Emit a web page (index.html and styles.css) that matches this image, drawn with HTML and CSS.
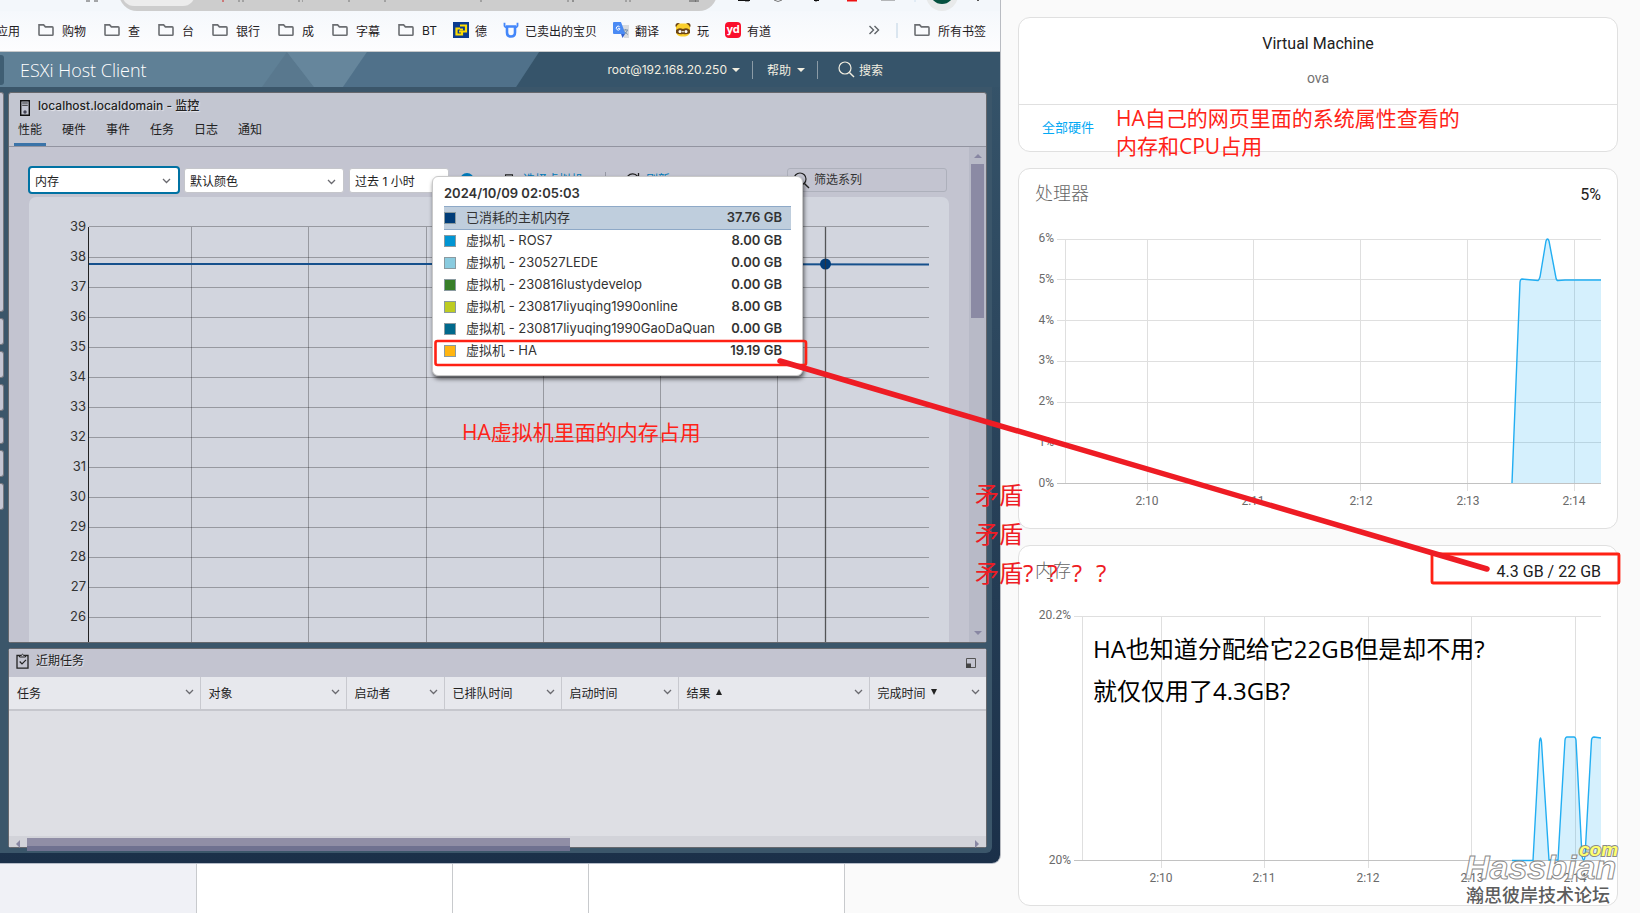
FILE: index.html
```html
<!DOCTYPE html>
<html lang="zh-CN">
<head>
<meta charset="utf-8">
<title>ESXi Host Client</title>
<link rel="stylesheet" href="styles.css">
</head>
<body>
<svg class="defs" aria-hidden="true">
  <symbol id="folder" viewBox="0 0 16 16"><path d="M1 2.9h4.6l1.8 2H14.2q.8 0 .8.8v6.8q0 .8-.8.8H1.8q-.8 0-.8-.8z" fill="none" stroke="#6b6e72" stroke-width="1.6"/></symbol>
  <symbol id="chev" viewBox="0 0 9 6"><path d="M1 1l3.5 3.5L8 1" fill="none" stroke="#6a6a70" stroke-width="1.3"/></symbol>
  <symbol id="lens" viewBox="0 0 17 17"><circle cx="7" cy="7" r="6" fill="none" stroke="currentColor" stroke-width="1.2"/><path d="M11.4 11.4L16 16" stroke="currentColor" stroke-width="1.4"/></symbol>
</svg>
<div class="desktop">
  <div class="left">
    <section class="window">
      <div class="omnibar" aria-hidden="true">
        <svg class="omni-art" viewBox="0 0 1000 11">
          <rect x="119" y="-30" width="598" height="41" rx="18" fill="#cdcdcd"/>
          <rect x="122" y="-24" width="73" height="30" rx="12" fill="#ececec"/>
          <path d="M86 1h4M94 1h4M572 1h2M689 1h10M695 1h1M745 1h4M815 1h2" stroke="#555" stroke-width="1"/>
          <path d="M223 0v2" stroke="#c22"/><path d="M238 1h8M298 1h5M348 1h3M384 1h3M480 1h4M568 0v2M625 1h7" stroke="#777" stroke-dasharray="2 2"/>
          <path d="M738 0h12v1h-12z" fill="#111"/><path d="M774 0q4 3 8 0" fill="none" stroke="#777"/><path d="M814 0h5v1h-5z" fill="#111"/><path d="M847 0h10v1.500h-10z" fill="#e11"/><path d="M881 0h14" stroke="#777"/><path d="M915 0v2" stroke="#cfe0ee"/>
          <circle cx="942" cy="-5" r="16" fill="#e8eaea"/><circle cx="942" cy="-8" r="12" fill="#06513f"/><path d="M977 0h2v1h-2z" fill="#555"/>
        </svg>
      </div>
      <nav class="bookmarks" aria-label="书签">
        <a class="bm bm-cut" href="#">应用</a>
        <div class="bm-group">
          <a class="bm" href="#"><svg><use href="#folder"/></svg>购物</a>
          <a class="bm" href="#"><svg><use href="#folder"/></svg>查</a>
          <a class="bm" href="#"><svg><use href="#folder"/></svg>台</a>
          <a class="bm" href="#"><svg><use href="#folder"/></svg>银行</a>
          <a class="bm" href="#"><svg><use href="#folder"/></svg>成</a>
          <a class="bm" href="#"><svg><use href="#folder"/></svg>字幕</a>
          <a class="bm" href="#"><svg><use href="#folder"/></svg>BT</a>
        </div>
        <div class="bm-group bm-sites">
          <a class="bm" href="#"><svg viewBox="0 0 16 16"><path fill="#0b3b8e" d="M0 0h16v16H0z"/><path d="M7 3.500h6v6h-3M10 7.500H7" fill="none" stroke="#fd0" stroke-width="2.200"/><path d="M7 6.500H3.500v6h5.500V9.500H6" fill="none" stroke="#fd0" stroke-width="2.200"/></svg>德</a>
          <a class="bm" href="#"><svg viewBox="0 0 16 16"><path d="M4 4.500v6q0 4 4 4t4-4v-6z" fill="none" stroke="#4487fa" stroke-width="2.600"/><path d="M1.500.800V4q.5 1.500 2.500 1.500M14.500.800V4q-.5 1.500-2.500 1.500" stroke="#4487fa" stroke-width="1.800" fill="none"/></svg>已卖出的宝贝</a>
          <a class="bm" href="#"><svg viewBox="0 0 16 16"><path fill="#d8dade" d="M7 3h9v13h-5z"/><path d="M0 1q0-1 1-1h7l4.500 12H1q-1 0-1-1z" fill="#4a8af4"/><path fill="#3561cf" d="M8 12h4l-2.500 4z"/><path d="M6.500 4.500a2 2 0 1 0 .2 3V6.300H4.800" stroke="#fff" fill="none"/><path d="M10.500 8H15M12.700 7v1M14.500 8q-1 3-3 4M11.500 9.500l3.300 3" stroke="#7890a8" fill="none"/></svg>翻译</a>
          <a class="bm" href="#"><svg viewBox="0 0 16 16"><circle cx="3" cy="3.500" r="2.500" fill="#6b4516"/><circle cx="13" cy="3.500" r="2.500" fill="#6b4516"/><rect x="1" y="1.500" width="14" height="13" rx="5" fill="#fbcf2c"/><path d="M1 8q3-3 7-1 4-2 7 1v3q-3 2-7 1-4 1-7-1z" fill="#6b4516"/><circle cx="5" cy="9.500" r="1.500" fill="#fff"/><circle cx="11" cy="9.500" r="1.500" fill="#fff"/><path d="M7 9h2l-1 2z" fill="#fff"/></svg>玩</a>
          <a class="bm" href="#"><span class="yd" aria-hidden="true">yd</span>有道</a>
        </div>
        <button class="bm bm-more" aria-label="更多"><svg viewBox="0 0 12 12"><path d="M1.500 2l4 4-4 4M6.500 2l4 4-4 4" fill="none" stroke="#5f6368" stroke-width="1.400"/></svg></button>
        <span class="bm-sep"></span>
        <a class="bm bm-all" href="#"><svg><use href="#folder"/></svg>所有书签</a>
      </nav>
      <div class="esxi">
        <header class="esxi-head">
          <svg class="head-art" viewBox="0 0 1000 35" preserveAspectRatio="none" aria-hidden="true">
            <path fill="#5f8096" d="M0 0h1000v35H0z"/><path fill="#59788e" d="M262 35L287 0l27 35z"/><path fill="#66869c" d="M287 0h80l-24 35h-29z"/><path fill="#50718a" d="M367 0h172l-23 35H343z"/><path fill="#36546a" d="M539 0h461v35H516z"/><rect x="-6" y="3" width="10" height="30" rx="3" fill="#3f5e73"/>
          </svg>
          <h1>ESXi Host Client</h1>
          <button class="hb hb-user">root@192.168.20.250<i class="caret"></i></button>
          <span class="hsep"></span>
          <button class="hb hb-help">帮助<i class="caret"></i></button>
          <span class="hsep"></span>
          <button class="hb hb-search"><svg><use href="#lens"/></svg>搜索</button>
        </header>
        <div class="frame">
          <aside class="rail" aria-hidden="true"><i class="tall"></i><i></i><i></i><i></i><i></i><i></i><i></i></aside>
          <main class="panes">
            <section class="pane">
              <div class="pane-title">
                <svg class="host" viewBox="0 0 10 16"><path d="M.7.700h8.600v14.600H.7z" fill="none" stroke="#111" stroke-width="1.400"/><path d="M2.200 3h5.600M2.200 5.300h5.600" stroke="#333"/><circle cx="5" cy="12" r="1.700" fill="#445"/></svg>
                <h2>localhost.localdomain - 监控</h2>
              </div>
              <nav class="tabs"><button class="on">性能</button><button>硬件</button><button>事件</button><button>任务</button><button>日志</button><button>通知</button></nav>
              <div class="scroll">
                <div class="view">
                  <div class="tools">
                    <div class="pick pick-a"><select aria-label="指标"><option>内存</option></select><svg><use href="#chev"/></svg></div>
                    <div class="pick pick-b"><select aria-label="颜色"><option>默认颜色</option></select><svg><use href="#chev"/></svg></div>
                    <div class="pick pick-c"><select aria-label="时间范围"><option>过去 1 小时</option></select></div>
                    <svg class="info" viewBox="0 0 14 14"><circle cx="7" cy="7" r="7" fill="#0079b8"/><path d="M7 6v5M7 3v1.500" stroke="#fff" stroke-width="1.600"/></svg>
                    <button class="act act-vm"><svg viewBox="0 0 10 16"><path d="M1 1h8v14H1z" fill="none" stroke="#222" stroke-width="1.200"/></svg>选择虚拟机</button>
                    <span class="tsep"></span>
                    <button class="act act-re"><svg viewBox="0 0 16 16"><path d="M13.500 9A6 6 0 1 1 12.500 4.300M13.500 1v4h-4" fill="none" stroke="#222" stroke-width="1.300"/></svg>刷新</button>
                    <label class="filter"><svg><use href="#lens"/></svg><input type="text" placeholder="筛选系列" aria-label="筛选系列"></label>
                  </div>
                  <div class="chart">
                    <svg viewBox="29 197 920 445" role="img" aria-label="内存使用情况图表">
                      <path class="g" d="M89 226.500H929M89 257.500H929M89 287.500H929M89 317.500H929M89 347.500H929M89 377.500H929M89 407.500H929M89 437.500H929M89 467.500H929M89 497.500H929M89 527.500H929M89 557.500H929M89 587.500H929M89 617.500H929M191.500 227V642M308.500 227V642M426.500 227V642M543.500 227V642M660.500 227V642M777.500 227V642"/>
                      <path d="M88.500 227V642" stroke="#222"/>
                      <path d="M89 264H540L929 264.500" stroke="#16508c" stroke-width="2" fill="none"/>
                      <circle cx="825.500" cy="264" r="5.500" fill="#003d79"/>
                      <path d="M825.500 227V642" stroke="#333" stroke-opacity=".8" stroke-width="1.300"/>
                      <g class="ax"><text x="86" y="231">39</text><text x="86" y="261">38</text><text x="86" y="291">37</text><text x="86" y="321">36</text><text x="86" y="351">35</text><text x="86" y="381">34</text><text x="86" y="411">33</text><text x="86" y="441">32</text><text x="86" y="471">31</text><text x="86" y="501">30</text><text x="86" y="531">29</text><text x="86" y="561">28</text><text x="86" y="591">27</text><text x="86" y="621">26</text></g>
                    </svg>
                  </div>
                </div>
                <div class="vbar" aria-hidden="true"><i class="up"></i><i class="vthumb"></i><i class="down"></i></div>
              </div>
            </section>
            <section class="pane tasks">
              <div class="tasks-title">
                <svg class="clip" viewBox="0 0 13 16"><path d="M1 2.500h11v12.700H1z" fill="none" stroke="#222" stroke-width="1.300"/><path d="M3.500 4V2.500h1.700q1.300-2.500 2.600 0h1.700V4z" fill="#c3c4d0" stroke="#222"/><path d="M3.700 8.500l2.300 2.300 4-4" fill="none" stroke="#222" stroke-width="1.200"/></svg>
                <h2>近期任务</h2>
                <button class="dock" aria-label="还原"><svg viewBox="0 0 10 10"><path d="M.5.500h9v9h-9z" fill="none" stroke="#555"/><path d="M0 5.500h5V10H0z" fill="#444"/></svg></button>
              </div>
              <table class="grid">
                <colgroup><col class="c1"><col class="c2"><col class="c3"><col class="c4"><col class="c4"><col class="c1"><col class="c5"></colgroup>
                <thead><tr>
                  <th><div>任务<svg><use href="#chev"/></svg></div></th><th><div>对象<svg><use href="#chev"/></svg></div></th><th><div>启动者<svg><use href="#chev"/></svg></div></th><th><div>已排队时间<svg><use href="#chev"/></svg></div></th><th><div>启动时间<svg><use href="#chev"/></svg></div></th><th><div>结果<i class="asc"></i><svg><use href="#chev"/></svg></div></th><th><div>完成时间<i class="desc"></i><svg><use href="#chev"/></svg></div></th>
                </tr></thead>
              </table>
              <div class="hbar" aria-hidden="true"><i class="prev"></i><i class="hthumb"></i><i class="next"></i></div>
            </section>
          </main>
        </div>
      </div>
    </section>
    <div class="behind" aria-hidden="true"><i></i><i></i><i></i><i></i></div>
  </div>

  <div class="ha">
    <section class="card info-card">
      <div class="vm"><h2>Virtual Machine</h2><p>ova</p></div>
      <div class="card-foot"><a href="#">全部硬件</a></div>
    </section>
    <section class="card">
      <div class="card-head"><h3>处理器</h3><span>5%</span></div>
      <svg class="plot" viewBox="1019 222 598 306" role="img" aria-label="处理器使用率">
        <path class="pg" d="M1057 239.500H1601M1057 279.500H1601M1057 320.500H1601M1057 361.500H1601M1057 402.500H1601M1057 442.500H1601M1065.500 239V483M1147.500 239V491M1253.500 239V491M1360.500 239V491M1467.500 239V491M1574.500 239V491"/>
        <path class="pb" d="M1057 483.500H1601"/>
        <path class="pf" d="M1512 483L1520 282Q1520.500 279 1522 279L1538 280.500Q1539 280 1540 277L1546 241Q1547.500 237 1549 241L1556 278Q1556.500 280.500 1558 280.500L1565 280H1601V483z"/>
        <path class="pl" d="M1512 483L1520 282Q1520.500 279 1522 279L1538 280.500Q1539 280 1540 277L1546 241Q1547.500 237 1549 241L1556 278Q1556.500 280.500 1558 280.500L1565 280H1601"/>
        <g class="yl"><text x="1054" y="242">6%</text><text x="1054" y="283">5%</text><text x="1054" y="324">4%</text><text x="1054" y="364">3%</text><text x="1054" y="405">2%</text><text x="1054" y="446">1%</text><text x="1054" y="487">0%</text></g>
        <g class="xl"><text x="1147" y="505">2:10</text><text x="1253" y="505">2:11</text><text x="1361" y="505">2:12</text><text x="1468" y="505">2:13</text><text x="1574" y="505">2:14</text></g>
      </svg>
    </section>
    <section class="card">
      <div class="card-head"><h3>内存</h3><span>4.3 GB / 22 GB</span></div>
      <svg class="plot" viewBox="1019 599 598 306" role="img" aria-label="内存使用率">
        <path class="pg" d="M1074 616.500H1601M1082.500 616V860M1161.500 616V868M1264.500 616V868M1368.500 616V868M1471.500 616V868M1575.500 616V868"/>
        <path class="pb" d="M1074 860.500H1601"/>
        <path class="pf" d="M1533 860L1539.500 742Q1540.500 734 1541.500 742L1549 860H1558L1565 740Q1565.500 737 1567 737H1574Q1575.500 737 1576 740L1582 856Q1584 864 1585 856L1591.500 740Q1592 737 1594 737L1601 738V860z"/>
        <path class="pl" d="M1512 860.500H1533L1539.500 742Q1540.500 734 1541.500 742L1549 860H1558L1565 740Q1565.500 737 1567 737H1574Q1575.500 737 1576 740L1582 856Q1584 864 1585 856L1591.500 740Q1592 737 1594 737L1601 738"/>
        <g class="yl"><text x="1071" y="619">20.2%</text><text x="1071" y="864">20%</text></g>
        <g class="xl"><text x="1161" y="882">2:10</text><text x="1264" y="882">2:11</text><text x="1368" y="882">2:12</text><text x="1472" y="882">2:13</text><text x="1575" y="882">2:14</text></g>
      </svg>
    </section>
  </div>

  <div class="tip" role="tooltip">
    <h4>2024/10/09 02:05:03</h4>
    <table>
      <tr class="hot"><td><i class="s1"></i></td><td>已消耗的主机内存</td><td>37.76 GB</td></tr>
      <tr><td><i class="s2"></i></td><td>虚拟机 - ROS7</td><td>8.00 GB</td></tr>
      <tr><td><i class="s3"></i></td><td>虚拟机 - 230527LEDE</td><td>0.00 GB</td></tr>
      <tr><td><i class="s4"></i></td><td>虚拟机 - 230816lustydevelop</td><td>0.00 GB</td></tr>
      <tr><td><i class="s5"></i></td><td>虚拟机 - 230817liyuqing1990online</td><td>8.00 GB</td></tr>
      <tr><td><i class="s6"></i></td><td>虚拟机 - 230817liyuqing1990GaoDaQuan</td><td>0.00 GB</td></tr>
      <tr><td><i class="s7"></i></td><td>虚拟机 - HA</td><td>19.19 GB</td></tr>
    </table>
  </div>
  <p class="note n-vm">HA虚拟机里面的内存占用</p>
  <p class="note n-ha">HA自己的网页里面的系统属性查看的<br>内存和CPU占用</p>
  <p class="note n-clash">矛盾<br>矛盾<br>矛盾?<span>?</span><span>?</span><span>?</span></p>
  <p class="note n-ask">HA也知道分配给它22GB但是却不用?<br>就仅仅用了4.3GB?</p>
  <svg class="marks" viewBox="0 0 1640 913" aria-hidden="true">
    <rect x="435.500" y="341" width="370.500" height="24" rx="2" fill="none" stroke="#ff2114" stroke-width="2.600"/>
    <rect x="1432" y="554" width="187" height="29" rx="1" fill="none" stroke="#ff2114" stroke-width="2.800"/>
    <path d="M780 361L1487 569" stroke="#ee1c24" stroke-width="5.500" stroke-linecap="round"/>
  </svg>
  <svg class="brand" viewBox="1460 838 165 70" aria-label="Hassbian.com">
    <text class="b1" x="1465" y="879">Hassbian</text>
    <text class="b2" x="1579" y="856">com</text>
    <text class="b3" x="1466" y="902">瀚思彼岸技术论坛</text>
  </svg>
</div>
</body>
</html>
```
FILE: styles.css
```css
* { box-sizing: border-box; }
body { margin: 0; background: #fafafa; font-family: "Inter", "Noto Sans CJK SC", sans-serif; font-size: 12px; color: #222; }
h1, h2, h3, h4, p { margin: 0; font-weight: 400; }
button, input, select { font: inherit; color: inherit; border: 0; background: none; padding: 0; margin: 0; }
a { color: inherit; text-decoration: none; }
i { display: block; font-style: normal; }
.defs { display: none; }

.desktop { position: relative; display: grid; grid-template-columns: 25fr 16fr; min-height: 100vh; overflow: hidden; }
.left { display: flex; flex-direction: column; min-width: 0; }
.window { border-right: 1px solid #b9bcc2; border-bottom: 1px solid #b5bcc8; border-radius: 0 0 9px 0; overflow: hidden; background: #fbfcfd; margin-right: -1px; position: relative; }

/* browser chrome */
.omnibar { height: 11px; background: #f3f7fb; overflow: hidden; }
.omni-art { display: block; width: 100%; }
.bookmarks { display: flex; align-items: center; height: 41px; padding: 0 14px 2px 0; border-bottom: 1px solid #c6c8ca; background: linear-gradient(#f5f8fc, #fdfdfe); color: #1f2023; white-space: nowrap; }
.bm { display: flex; align-items: center; gap: 8px; }
.bm svg { width: 16px; height: 16px; flex: none; }
.bm-cut { margin-left: -4px; margin-right: 18px; }
.bm-group { display: flex; gap: 18px; margin-right: 16px; }
.bm-sites { gap: 16px; }
.bm-sites .bm { gap: 6px; }
.yd { width: 16px; height: 16px; border-radius: 4px; background: #fa0f2c; color: #fff; font: 700 11px/14px "Inter", sans-serif; text-align: center; }
.bm-more { margin-left: auto; }
.bm-more svg { width: 12px; height: 12px; }
.bm-sep { width: 2px; height: 15px; margin: 0 16px; background: #dbe6f0; }

/* host client */
.esxi { background: linear-gradient(#36546a, #1b3049); padding: 0 8px 10px 0; }
.esxi-head { position: relative; display: flex; align-items: center; height: 35px; margin-right: -8px; padding: 0 117px 0 20px; color: #f2eee0; }
.head-art { position: absolute; inset: 0; width: 100%; height: 100%; }
.esxi-head > :not(.head-art) { position: relative; }
.esxi-head h1 { margin-right: auto; font: 300 18px/24px "Open Sans", sans-serif; color: #fff; }
.hb { display: flex; align-items: center; }
.caret { margin-left: 6px; border: 4px solid transparent; border-top-color: #f2eee0; border-bottom: 0; }
.hb-user .caret { margin-left: 5px; }
.hsep { width: 1px; height: 18px; margin: 0 14px 0 12px; background: #8b9ba6; }
.hb-search { gap: 4px; margin-left: 6px; }
.hb-search svg { width: 17px; height: 17px; }
.frame { display: flex; padding: 5px 5px 5px 0; background: #3b566a; border-radius: 0 0 6px 0; }
.rail { flex: none; display: flex; flex-direction: column; gap: 6px; width: 4px; margin-right: 4px; }
.rail i { height: 27px; background: #c5c6d3; border: 1px solid #77787f; border-left: 0; border-radius: 0 3px 3px 0; }
.rail .tall { height: 220px; }
.panes { flex: 1; min-width: 0; display: flex; flex-direction: column; gap: 5px; }
.pane { background: #c3c6d1; border: 1px solid #66686d; border-radius: 3px; }
.pane-title { display: flex; gap: 8px; align-items: center; height: 30px; padding: 0 11px; }
.host { width: 10px; height: 16px; }
.pane-title h2, .tasks-title h2 { font-size: 12px; line-height: 16px; text-shadow: 1px 1px 1px #e8e8ee; }
.pane-title h2 { font-weight: 500; margin-top: -5px; }
.tabs { display: flex; gap: 12px; height: 24px; padding-left: 5px; border-bottom: 1px solid #9294a0; }
.tabs button { width: 32px; padding-bottom: 6px; border-bottom: 3px solid transparent; line-height: 14px; }
.tabs .on { border-color: #3a73a8; }
.scroll { display: flex; }
.view { flex: 1; min-width: 0; padding: 19px 20px 0 19px; background: #c3c4d0; }
.tools { display: flex; align-items: center; height: 28px; margin-bottom: 3px; white-space: nowrap; }
.pick { position: relative; display: flex; height: 25px; margin-right: 5px; background: #fff; border: 1px solid #c5c6cb; border-radius: 3px; }
.pick select { flex: 1; width: 100%; padding: 2px 4px 0 5px; appearance: none; font-size: 12px; }
.pick svg { position: absolute; right: 7px; top: 10px; width: 9px; height: 6px; pointer-events: none; }
.pick-a { width: 152px; height: 28px; border: 2px solid #0072a3; border-radius: 4px; margin-right: 4px; }
.pick-b { width: 160px; }
.pick-c { width: 100px; margin-right: 11px; }
.info { width: 14px; height: 14px; }
.act { display: flex; align-items: center; height: 24px; padding-bottom: 3px; color: #0079b8; }
.act-vm { gap: 9px; margin-left: 30px; }
.act-vm svg { width: 10px; height: 14px; margin-top: 4px; }
.tsep { width: 1px; height: 16px; margin: 0 19px 0 22px; background: #9698a4; }
.act-re { gap: 5px; }
.act-re svg { width: 16px; height: 16px; margin-top: 3px; }
.filter { display: flex; align-items: center; gap: 4px; width: 160px; height: 24px; margin-left: auto; margin-right: 2px; padding-left: 5px; border: 1px solid #adb0bb; border-radius: 3px; }
.filter svg { flex: none; width: 17px; height: 17px; }
.filter input { width: 100%; padding-bottom: 2px; outline: 0; }
.filter input::placeholder { color: #333; opacity: 1; }
.chart { margin: 0 0 0 1px; background: #d2d5de; border-radius: 7px 7px 0 0; }
.chart svg { display: block; width: 100%; }
.g { stroke: #000; stroke-opacity: .28; fill: none; }
.ax { font-size: 13px; fill: #333; text-anchor: end; }
.vbar { display: flex; flex-direction: column; align-items: center; width: 17px; padding: 7px 0; background: #b8bac7; }
.up, .down { border: 4px solid transparent; border-bottom-color: #8887a3; border-top: 0; }
.down { margin-top: auto; border-top: 4px solid #8887a3; border-bottom: 0; }
.vthumb { width: 13px; height: 154px; margin-top: 6px; background: #8b8aa4; }

.tasks { background: #dedfe4; height: 200px; display: flex; flex-direction: column; }
.tasks-title { display: flex; align-items: center; height: 28px; padding: 0 10px 4px 7px; background: #c3c4d0; gap: 7px; }
.clip { width: 13px; height: 16px; }
.dock { margin-left: auto; height: 10px; margin-top: 4px; display: flex; }
.dock svg { width: 10px; height: 10px; }
.grid { width: 100%; table-layout: fixed; border-collapse: collapse; }
.grid th { height: 33px; padding: 0 9px 2px 8px; text-align: left; font-weight: 400; background: #e7e8ed; border-right: 1px solid #c8c9cf; border-bottom: 2px solid #c6c7cd; }
.grid th:last-child { border-right: 0; }
.grid th div { display: flex; align-items: center; }
.grid th svg { width: 9px; height: 6px; margin-left: auto; margin-right: -3px; }
.c1 { width: 191px; } .c2 { width: 146px; } .c3 { width: 98px; } .c4 { width: 117px; }
.asc, .desc { margin-left: 5px; border: 3px solid transparent; border-bottom: 6px solid #222; border-top: 0; }
.desc { border-top: 6px solid #222; border-bottom: 0; }
.hbar { position: relative; display: flex; align-items: center; height: 11px; margin-top: auto; padding: 0 7px; background: #d2d3d9; }
.prev, .next { border: 4px solid transparent; border-right-color: #8887a3; border-left: 0; margin-top: 4px; }
.next { margin-left: auto; border-left: 4px solid #8887a3; border-right: 0; }
.hthumb { width: 56.4%; height: 13px; margin: 2px 0 -4px 7px; background: linear-gradient(#908ea6 8px, #6f7190 8px); align-self: flex-start; flex: none; }

.behind { flex: 1; display: grid; grid-template-columns: 197px 256px 136px 256px; min-height: 40px; }
.behind i { background: #fff; border-right: 1px solid #c8cacd; }
.behind i:first-child { background: #f0f1f6; }

/* system panel */
.ha { padding: 17px 22px 7px 18px; display: flex; flex-direction: column; gap: 16px; font-family: "Roboto", "Noto Sans CJK SC", sans-serif; }
.card { background: #fff; border: 1px solid #e0e0e0; border-radius: 12px; }
.vm { height: 87px; padding-top: 14px; text-align: center; border-bottom: 1px solid #e0e0e0; }
.vm h2 { font-size: 16px; line-height: 24px; color: #212121; }
.vm p { margin-top: 13px; font-size: 14px; line-height: 18px; color: #727272; }
.card-foot { height: 46px; padding: 14px 23px; font-size: 13px; line-height: 18px; color: #03a9f4; }
.card-head { display: flex; justify-content: space-between; align-items: center; height: 53px; padding: 0 16px 2px; }
.card-head h3 { font-size: 18px; line-height: 24px; font-weight: 300; color: #666; padding-bottom: 2px; }
.card-head span { font-size: 16px; color: #212121; }
.plot { display: block; width: 100%; }
.pg { stroke: #dfdfdf; fill: none; }
.pb { stroke: #c2c2c2; fill: none; }
.pf { fill: #03a9f4; fill-opacity: .17; }
.pl { fill: none; stroke: #22aef2; stroke-width: 1.400px; }
.yl, .xl { font-size: 12px; fill: #6a6a6a; text-anchor: end; }
.xl { text-anchor: middle; }

/* tooltip over the chart */
.tip { position: absolute; left: 432px; top: 176px; width: 371px; height: 200px; padding: 7px 11px 0 11px; background: #fff; border: 1px solid #c9c9c9; border-radius: 6px; box-shadow: 1px 3px 4px rgba(0, 0, 0, .6); font-size: 13px; color: #333; }
.tip h4 { font-size: 13px; font-weight: 600; line-height: 18px; margin-bottom: 4px; }
.tip table { width: 100%; height: 157px; border-collapse: collapse; white-space: nowrap; }
.tip td { padding: 0 0 3px; line-height: 18px; }
.tip td:first-child { width: 22px; padding-bottom: 1px; }
.tip td:last-child { text-align: right; padding-right: 9px; font-weight: 600; }
.tip .hot td { background: #bfcedd; border-top: 1px solid #8ea9c7; border-bottom: 1px solid #8ea9c7; }
.tip i { width: 12px; height: 12px; border: 1px solid #8a9aa0; }
.s1 { background: #003d79; } .s2 { background: #0095d3; } .s3 { background: #89cbdf; } .s4 { background: #387f29; } .s5 { background: #bdcc22; } .s6 { background: #00698c; } .s7 { background: #ffb511; }

/* annotations */
.note { position: absolute; font-family: "Open Sans", "Noto Sans CJK SC", sans-serif; font-size: 21px; line-height: 28px; color: #ff2318; white-space: nowrap; z-index: 2; }
.n-vm { left: 462px; top: 418px; }
.n-ha { left: 1116px; top: 104px; }
.n-clash { left: 975px; top: 475px; font-size: 24px; line-height: 39px; color: #ee1c24; }
.n-clash span { margin-left: 14px; }
.n-ask { left: 1093px; top: 628px; font-size: 24px; line-height: 42px; color: #000; }
.marks { position: absolute; left: 0; top: 0; width: 100%; pointer-events: none; }
.brand { position: absolute; right: 15px; top: 838px; width: 165px; height: 70px; pointer-events: none; }
.b1, .b2 { font-family: "Liberation Sans", sans-serif; font-style: italic; font-weight: 700; stroke: #8b8b8b; stroke-width: 2px; paint-order: stroke; }
.b1 { font-size: 34px; fill: #fff; fill-opacity: .8; stroke-width: 1px; paint-order: normal; }
.b2 { font-size: 19px; fill: #ffff6e; }
.b3 { font-family: "Noto Sans CJK SC", sans-serif; font-size: 18px; font-weight: 500; fill: #5c5c5c; stroke: #fff; stroke-width: 2px; paint-order: stroke; }
```
